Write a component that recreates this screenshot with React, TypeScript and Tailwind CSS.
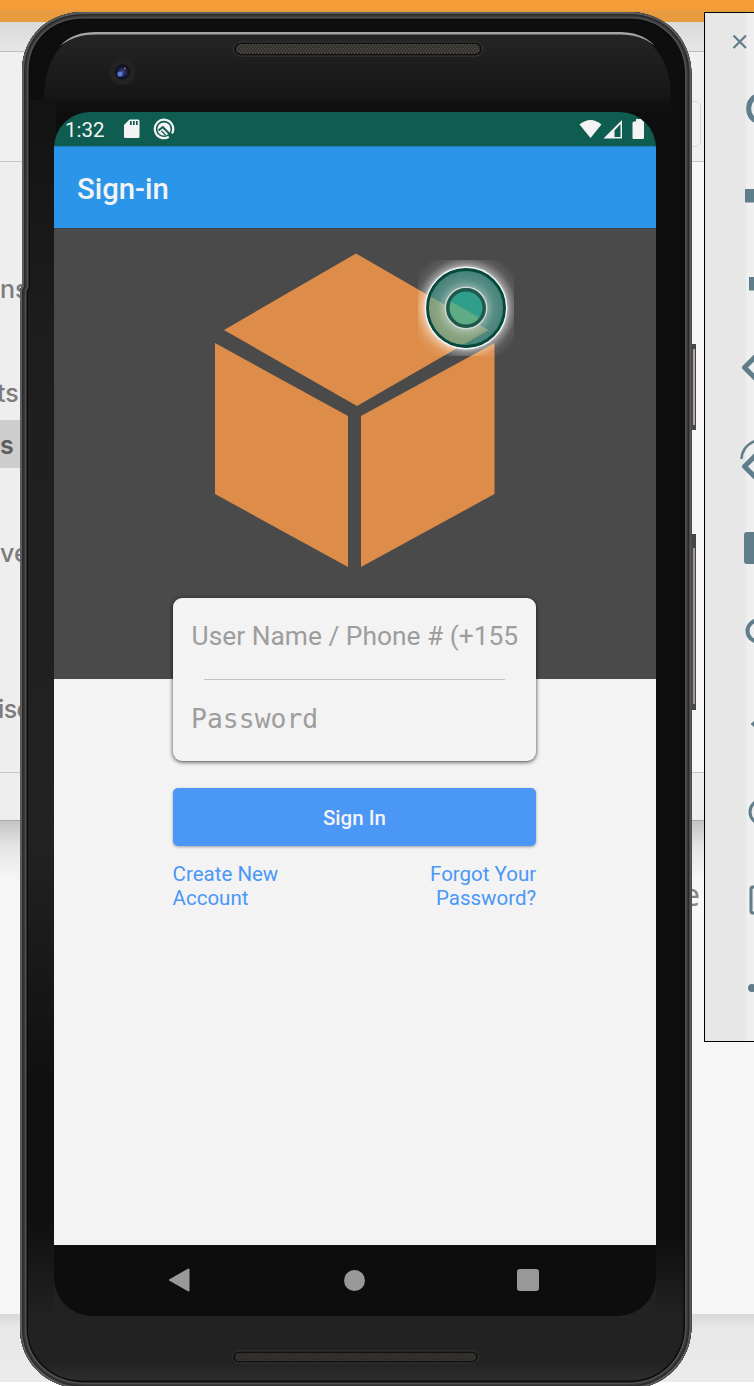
import React from "react";

const BODY =
  "M22 72 C22 36 48 12 84 12 H630 C664 12 691.5 38 691.5 74 V1326 C691.5 1362 664 1389 628 1389 H86 C46 1389 20 1362 20 1328 V290 L22 286 Z";

function Desktop() {
  return (
    <div className="absolute inset-0 flex flex-col bg-[#f7f7f7]">
      <div className="h-[10px] bg-[#f49c38]" />
      <div className="h-[12px] bg-[#e99b40]" />
      <div className="h-[30px] border-b border-[#bdbdbd] bg-linear-to-b from-[#dadada] to-[#e6e6e6]" />
      <div className="flex h-[110px] items-start justify-end border-b border-[#c6c6c6] bg-[#f0f0f0] pr-[53px]">
        <div className="mt-[49px] h-[46px] w-[40px] rounded-md border border-[#d6d6d6]" />
      </div>
      <div className="flex h-[611px] border-b border-[#c6c6c6]">
        <div className="flex w-[60px] flex-col bg-[#eeeeee] pt-[101px] text-[25px] leading-[52px] font-medium text-[#7c7c7c]">
          <div className="h-[104px]">ns</div>
          <div className="-ml-[3px] h-[52px]">ts</div>
          <div className="mt-px h-[48px] bg-[#cdcdcd] font-semibold leading-[50px] text-[#5c5c5c]">s</div>
          <div className="mt-[59px] h-[156px]">ve</div>
          <div className="-ml-[2px] tracking-[-0.6px]">ise</div>
        </div>
      </div>
      <div className="h-[48px] border-b border-[#a9a9a9] bg-[#eeeeee]" />
      <div className="h-[60px] bg-linear-to-b from-[#c4c4c4] via-[#e4e4e4] via-40% to-[#f7f7f7]" />
      <div className="flex h-[433px] justify-end pr-[54px] font-['Noto_Sans'] text-[30px] leading-[30px] text-[#858585]">
        <span className="-mt-px">e</span>
      </div>
      <div className="h-[68px] bg-linear-to-b from-[#d8d8d8] via-[#e8e8e8] via-20% to-[#ebebeb]" />
      <div className="h-[4px] bg-white" />
    </div>
  );
}

function Bezel() {
  return (
    <svg className="absolute inset-0" width="754" height="1386" viewBox="0 0 754 1386" fill="none">
      <defs>
        <clipPath id="body"><path d={BODY} /></clipPath>
        <linearGradient id="face" x1="0" y1="33" x2="0" y2="112" gradientUnits="userSpaceOnUse">
          <stop offset="0" stopColor="#252525" />
          <stop offset=".83" stopColor="#161616" />
          <stop offset=".84" stopColor="#121212" />
          <stop offset="1" stopColor="#101010" />
        </linearGradient>
        <linearGradient id="side" x1="0" y1="112" x2="0" y2="1320" gradientUnits="userSpaceOnUse">
          <stop offset="0" stopColor="#131313" />
          <stop offset=".2" stopColor="#1e1e1e" />
          <stop offset=".6" stopColor="#222" />
          <stop offset=".8" stopColor="#101010" />
          <stop offset=".92" stopColor="#101010" />
          <stop offset="1" stopColor="#222" />
        </linearGradient>
        <linearGradient id="sideR" x1="0" y1="1230" x2="0" y2="1318" gradientUnits="userSpaceOnUse">
          <stop offset="0" stopColor="#0d0d0d" />
          <stop offset="1" stopColor="#222" />
        </linearGradient>
        <linearGradient id="chin" x1="0" y1="1316" x2="0" y2="1386" gradientUnits="userSpaceOnUse">
          <stop offset="0" stopColor="#222" />
          <stop offset=".65" stopColor="#222" />
          <stop offset=".9" stopColor="#2d2d2d" />
          <stop offset=".97" stopColor="#050505" />
        </linearGradient>
        <pattern id="mesh" width="3" height="4" patternUnits="userSpaceOnUse">
          <rect width="3" height="4" fill="#2f2d2a" />
          <rect width="1.4" height="1.5" fill="#545049" />
          <rect x="1.5" y="2" width="1.4" height="1.5" fill="#545049" />
        </pattern>
        <radialGradient id="lens">
          <stop offset="0" stopColor="#3d4f94" />
          <stop offset=".45" stopColor="#1e2850" />
          <stop offset="1" stopColor="#0a0b14" />
        </radialGradient>
      </defs>
      <rect x="690" y="344" width="6" height="86" fill="#4b4547" />
      <rect x="693" y="349" width="2" height="76" fill="#b3a7a9" />
      <rect x="690" y="534" width="6" height="176" fill="#4b4547" />
      <rect x="693" y="548" width="2" height="156" fill="#a3989a" />
      <g clipPath="url(#body)">
        <path d={BODY} fill="#0e0e0e" />
        <path d="M44 99 C44 60 62 33 96 33 H620 C652 33 671 60 671 99 V112 H44 Z" fill="url(#face)" />
        <rect x="20" y="100" width="36" height="1220" fill="url(#side)" />
        <rect x="654" y="1230" width="38" height="90" fill="url(#sideR)" />
        <rect x="54" y="1260" width="602" height="60" fill="#222" />
        <rect x="20" y="1316" width="672" height="74" fill="url(#chin)" />
        <path d={BODY} stroke="#0c0c0c" strokeWidth="16" strokeLinejoin="round" />
        <path d={BODY} stroke="#505050" strokeWidth="13" strokeLinejoin="round" />
        <path d={BODY} stroke="#3a3a3a" strokeWidth="10" strokeLinejoin="round" />
        <path d={BODY} stroke="#2a2a2a" strokeWidth="7" strokeLinejoin="round" />
        <path d={BODY} stroke="#5c5c5c" strokeWidth="4" strokeLinejoin="round" />
      </g>
      <path d="M60 46 C72 37 82 34.500 96 34.500 H620 C634 34.500 645 38 655 46 C645 35 632 32 620 32 H96 C82 32 70 35 60 46 Z" fill="#a5a5a5" />
      <rect x="233.500" y="42" width="249" height="14" rx="7" fill="#111" stroke="#3d3c39" />
      <rect x="236" y="44" width="244" height="10" rx="5" fill="url(#mesh)" />
      <circle cx="122.500" cy="72" r="13" fill="#232323" />
      <circle cx="122.500" cy="72" r="7.500" fill="url(#lens)" />
      <circle cx="120" cy="74" r="2.600" fill="#5d78d0" />
      <circle cx="125" cy="68.500" r="1" fill="#a65d70" />
      <rect x="232.500" y="1351" width="246" height="12" rx="6" fill="#111" stroke="#383733" />
      <rect x="235" y="1353" width="241" height="8" rx="4" fill="url(#mesh)" opacity=".75" />
    </svg>
  );
}

function StatusBar() {
  return (
    <div className="flex h-[34px] items-center bg-[#0f5c50] pl-[11px] text-[20.5px] text-[#f3f3f3]">
      <span className="w-[59px] pt-[2px]">1:32</span>
      <svg width="16" height="20" viewBox="0 0 16 20" className="shrink-0">
        <path d="M5.500 0.500 H14 Q15.500 .5 15.500 2 V17.500 Q15.500 19 14 19 H1.500 Q0 19 0 17.500 V6 Z" fill="#f3f3f3" />
        <path d="M6 2 H7.700 V6 H6 Z M9 2 H10.700 V6 H9 Z M12 2 H13.700 V6 H12 Z" fill="#0f5c50" />
      </svg>
      <svg width="22" height="22" viewBox="0 0 22 22" className="ml-[13px] shrink-0" fill="none">
        <path d="M15.800 18.800 A9.200 9.200 0 1 1 19 15.500" stroke="#f3f3f3" strokeWidth="2.200" />
        <circle cx="11" cy="11" r="6.600" fill="#f3f3f3" />
        <path d="M5.500 12.500 L9.800 9 L17.500 17" stroke="#0f5c50" strokeWidth="2" />
        <path d="M8.500 13 L12.500 17" stroke="#0f5c50" strokeWidth="1.200" />
      </svg>
      <svg width="66" height="21" viewBox="0 0 66 21" className="mr-[11px] ml-auto shrink-0" fill="none">
        <path d="M0.500 5.500 Q11.500 -3.500 22.500 5.500 L11.500 19 Z" fill="#f3f3f3" />
        <path d="M24.500 19.500 L43 1 V19.500 Z" fill="#f3f3f3" />
        <path d="M35.500 11.500 L41.500 5 V18 H35.500 Z" fill="#0f5c50" />
        <path d="M55 2.500 H57 V0 H62 L65 3 V19 Q65 20 64 20 H54.500 Q53.500 20 53.500 19 V4 Q53.500 2.500 55 2.500 Z" fill="#f3f3f3" />
      </svg>
    </div>
  );
}

function SignIn() {
  return (
    <div className="flex h-[1017px] flex-col bg-[#f3f3f3]">
      <div className="flex h-[451px] w-full shrink-0 border-t border-[#3f4347] bg-[#4a4a4a] pt-[24px] pl-[161px]">
        <svg width="280" height="315" viewBox="215 253 280 315" fill="#dd8d49">
          <path d="M356 253.500 L488.500 330 L357 406 L224 330 Z" />
          <path d="M215 343 L348 416 V567 L215 494 Z" />
          <path d="M494.500 343 L361 416 V567 L494.500 494 Z" />
        </svg>
      </div>
      <div className="relative -mt-[81px] ml-[118.6px] flex h-[163px] w-[363.6px] shrink-0 flex-col rounded-[9px] bg-[#f3f3f3] shadow-[0_1px_4px_rgba(0,0,0,0.75)]">
        <div className="flex h-[81px] items-center overflow-hidden pb-[3px] pl-[19px] text-[26.35px] whitespace-nowrap text-[#9d9d9d]">User Name / Phone # (+155</div>
        <div className="mx-[31px] h-px bg-[#c4c4c4]" />
        <div className="flex h-[81px] items-center pb-[4px] pl-[18.5px] font-['DejaVu_Sans_Mono',monospace] text-[26.4px] text-[#9d9d9d]">Password</div>
      </div>
      <button className="mt-[27px] ml-[118.6px] h-[58px] w-[363.6px] shrink-0 rounded-[5px] bg-[#4b97f5] pt-[2px] text-[20.500px] font-medium text-[#f3f3f3] shadow-[0_1px_3px_rgba(0,0,0,0.35)]">Sign In</button>
      <div className="mt-[16px] ml-[118.6px] flex w-[363.6px] justify-between text-[20.500px] leading-[24px] text-[#4b97f5]">
        <span>Create New<br />Account</span>
        <span className="text-right">Forgot Your<br />Password?</span>
      </div>
    </div>
  );
}

function TouchMarker() {
  return (
    <svg className="absolute top-[260px] left-[418px]" width="96" height="96" viewBox="0 0 96 96" fill="none">
      <defs>
        <radialGradient id="glow" cx="48" cy="48" r="60" gradientUnits="userSpaceOnUse">
          <stop offset=".66" stopColor="#fff" stopOpacity=".7" />
          <stop offset=".74" stopColor="#fff" stopOpacity=".35" />
          <stop offset=".84" stopColor="#fff" stopOpacity=".1" />
          <stop offset="1" stopColor="#fff" stopOpacity="0" />
        </radialGradient>
        <radialGradient id="halo">
          <stop offset=".5" stopColor="#fff" stopOpacity=".4" />
          <stop offset=".75" stopColor="#fff" stopOpacity=".1" />
          <stop offset="1" stopColor="#fff" stopOpacity="0" />
        </radialGradient>
        <mask id="ring">
          <rect width="96" height="96" fill="#fff" />
          <circle cx="48" cy="48" r="40" fill="#000" />
        </mask>
      </defs>
      <circle cx="48" cy="48" r="60" fill="url(#glow)" mask="url(#ring)" />
      <circle cx="48" cy="48" r="39" fill="#41a595" fillOpacity=".6" />
      <circle cx="48" cy="48" r="38" fill="url(#halo)" />
      <circle cx="48" cy="48" r="40.500" stroke="#f4f4f4" strokeWidth="1.800" />
      <circle cx="48" cy="48" r="38.500" stroke="#04483e" strokeWidth="2.800" />
      <circle cx="48" cy="48" r="18" fill="#2f9e8a" />
      <path d="M31 48 L32 41 L63 58.500 Q54 68 42 64 Q33 60 31 48 Z" fill="#5fac84" />
      <circle cx="48" cy="48" r="20.700" stroke="#cfd8d2" strokeWidth="1.500" />
      <circle cx="48" cy="48" r="18.200" stroke="#1f584d" strokeWidth="3.500" />
    </svg>
  );
}

function Phone() {
  return (
    <div className="absolute inset-0 font-[Roboto,sans-serif]">
      <Bezel />
      <div className="relative mt-[112px] ml-[54px] flex h-[1204px] w-[602px] flex-col overflow-hidden rounded-t-[36px] rounded-b-[38px]">
        <StatusBar />
        <div className="flex h-[82px] items-center border-t border-[#2380b5] bg-[#2b95ea] pt-[4px] pl-[23px] text-[29.3px] font-medium text-[#f3f3f3]">Sign-in</div>
        <SignIn />
        <div className="flex h-[71px] items-center bg-[#0d0d0d] pb-px">
          <svg width="23" height="24" viewBox="0 0 23 24" className="ml-[114px]">
            <path d="M20.500 1.500 V22.500 L2 12 Z" fill="#999" stroke="#999" strokeWidth="2" strokeLinejoin="round" />
          </svg>
          <div className="ml-[153px] size-[21px] rounded-full bg-[#999]" />
          <div className="ml-[152px] size-[22px] rounded-[3px] bg-[#999]" />
        </div>
      </div>
      <TouchMarker />
    </div>
  );
}

function EmulatorToolbar() {
  return (
    <div className="absolute top-[12px] left-[704px] h-[1030px] w-[60px] border border-black bg-linear-to-r from-[#e7e7e7] from-[40px] to-[#efefef] to-[42px]">
      <svg width="50" height="1028" viewBox="705 13 50 1028" fill="none" stroke="#607d8b">
        <path d="M733.500 35.500 L746 48 M746 35.500 L733.500 48" strokeWidth="2.200" />
        <path d="M755 96.500 A14.500 14.500 0 0 0 755 120.500" strokeWidth="5" />
        <path d="M745 189 H755 V202.500 H745 Z M749 277 H755 V290.500 H749 Z" fill="#607d8b" stroke="none" />
        <path d="M757 355 L744.500 367.500 L757 380" strokeWidth="5" strokeLinejoin="round" />
        <path d="M757 454 L744.500 466.500 L757 479" strokeWidth="5" strokeLinejoin="round" />
        <path d="M741.500 459 Q742 446 756 440.500" strokeWidth="2.500" />
        <rect x="744" y="532" width="22" height="32" rx="3" fill="#607d8b" stroke="none" />
        <circle cx="758" cy="631" r="10.500" strokeWidth="4" />
        <path d="M752 724 L760 717 V731 Z" fill="#607d8b" stroke="#607d8b" strokeWidth="2" strokeLinejoin="round" />
        <circle cx="762" cy="812" r="12" strokeWidth="3" />
        <rect x="751" y="887" width="26" height="26" rx="2" strokeWidth="3" />
        <circle cx="752" cy="988" r="4" fill="#607d8b" stroke="none" />
      </svg>
    </div>
  );
}

export default function App() {
  return (
    <div className="relative h-[1386px] w-[754px] overflow-hidden bg-white font-[Inter,sans-serif]">
      <Desktop />
      <Phone />
      <EmulatorToolbar />
    </div>
  );
}
